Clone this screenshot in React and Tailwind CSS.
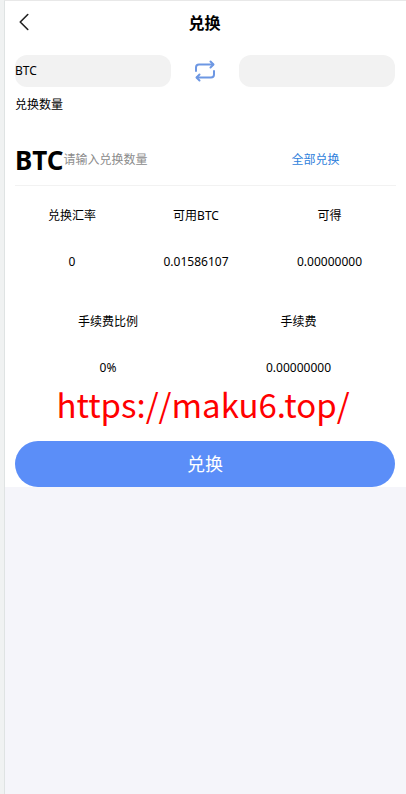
import { ChevronLeft } from 'lucide-react';

const SwapIcon = () => (
  <svg width="22" height="22" viewBox="0 0 22 22" fill="none" stroke="#6d97e3" strokeWidth="2" strokeLinecap="round" strokeLinejoin="round">
    <path d="M2 11V7.5C2 5.6 3.4 4.5 5 4.5H19" />
    <path d="M16.5 1.5L19.5 4.5L16.5 7.5" />
    <path d="M20 11V14.5C20 16.4 18.6 17.5 17 17.5H3" />
    <path d="M5.5 14.5L2.5 17.5L5.5 20.5" />
  </svg>
);

const Stat = ({ label, value, className }) => (
  <div className={`flex flex-col items-center ${className}`}>
    <div className="h-[17px] leading-[17px]">{label}</div>
    <div className="mt-[29px] h-[17px] leading-[17px]">{value}</div>
  </div>
);

export default function App() {
  return (
    <div className="flex min-h-[794px] border-l-[4px] border-l-[#f0f2f2] text-[12px] text-black" style={{ fontFamily: '"Noto Sans", "Noto Sans CJK SC", sans-serif' }}>
      <div className="flex-1 border-t border-t-[#e8e8e8] border-l border-l-[#dfe3e3] border-r border-r-[#eef0f0] bg-[#f5f5fa]">
        <div className="h-[486px] bg-white">
          <div className="relative flex h-[46px] items-center justify-center pb-[3px] pr-[2px]">
            <ChevronLeft size={30} strokeWidth={1.3} className="absolute left-[4px] top-[6px] text-[#222]" />
            <span className="text-[16px] font-bold">兑换</span>
          </div>

          <div className="mt-[8px] flex items-center pl-[10px] pr-[11px]">
            <div className="flex h-[32px] w-[156px] items-center rounded-[12px] bg-[#f2f2f2]">BTC</div>
            <div className="flex flex-1 justify-center"><SwapIcon /></div>
            <div className="h-[32px] w-[156px] rounded-[12px] bg-[#f2f2f2]"></div>
          </div>

          <div className="mt-[9px] pl-[10px] leading-[17px]">兑换数量</div>

          <div className="mx-[10px] mt-[23px] flex h-[50px] items-center border-b border-b-[#f2f2f2] pb-[2px]">
            <span className="text-[26px] font-bold leading-none">BTC</span>
            <span className="text-[#8c8c8c]">请输入兑换数量</span>
            <span className="ml-[144px] text-[#2f7fdc]">全部兑换</span>
          </div>

          <div className="mt-[21px] flex">
            <Stat label="兑换汇率" value="0" className="w-[134px]" />
            <Stat label="可用BTC" value="0.01586107" className="w-[114px]" />
            <Stat label="可得" value="0.00000000" className="w-[153px]" />
          </div>

          <div className="mt-[43px] flex">
            <Stat label="手续费比例" value="0%" className="w-[206px]" />
            <Stat label="手续费" value="0.00000000" className="w-[175px]" />
          </div>

          <div className="mt-[4px] pr-[5px] text-center font-['Noto_Sans_CJK_SC'] text-[33px] leading-[48px] text-[#ff0000]">https://maku6.top/</div>

          <button className="mx-[10px] mt-[13px] flex h-[46px] w-[380px] items-center justify-center rounded-[23px] bg-[#5b8ef8] text-[18px] text-white">兑换</button>
        </div>
      </div>
    </div>
  );
}
